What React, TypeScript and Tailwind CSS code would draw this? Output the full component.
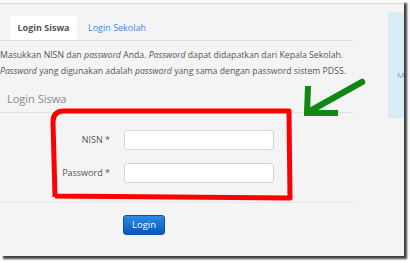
import React from "react";

export default function App() {
  const font = { fontFamily: '"Open Sans", "Liberation Sans", sans-serif' };
  return (
    <div className="w-[410px] h-[263px] bg-white" style={font}>
      <div className="relative w-[404px] h-[256px] bg-[#f4f4f4] shadow-[3px_3px_2px_rgba(0,0,0,0.75)] overflow-hidden">
        <div className="h-[4px] bg-[#fafafa] border-b border-[#dcdcdc]" />
        <div className="flex">
          <div className="w-[353px] shrink-0 overflow-hidden">
            <div className="mt-[12px] flex items-end border-b border-[#dddddd] pl-[10px] h-[25px]">
              <div className="h-[24px] w-[67px] bg-white flex items-center justify-center text-[9px] font-bold text-[#555]">
                Login Siswa
              </div>
              <div className="h-[24px] pl-[11px] flex items-center text-[9px] text-[#3b8ad8]">
                Login Sekolah
              </div>
            </div>
            <div className="mt-[6px] text-[8.7px] leading-[16px] text-[#555] whitespace-nowrap">
              <div>
                Masukkan NISN dan <i>password</i> Anda. <i>Password</i> dapat didapatkan dari Kepala Sekolah.
              </div>
              <div>
                <i>Password</i> yang digunakan adalah <i>password</i> yang sama dengan password sistem PDSS.
              </div>
            </div>
            <div className="mt-[12px] pb-[5px] pl-[7px] border-b border-[#e2e2e2] text-[11px] leading-[16px] text-[#8a8a8a]">
              Login Siswa
            </div>
            <div className="mt-[17px] flex flex-col gap-[13px]">
              <div className="flex items-center gap-[14px]">
                <div className="w-[110px] text-right text-[9px] text-[#555]">NISN *</div>
                <div className="w-[150px] h-[20px] bg-white border border-[#d4d4d4] rounded-[3px]" />
              </div>
              <div className="flex items-center gap-[14px]">
                <div className="w-[110px] text-right text-[9px] text-[#555]">Password *</div>
                <div className="w-[150px] h-[20px] bg-white border border-[#d4d4d4] rounded-[3px]" />
              </div>
            </div>
            <div className="mt-[19px] border-t border-[#e6e6e6]" />
            <div className="mt-[12px] pl-[123px]">
              <button className="w-[42px] h-[20px] rounded-[3px] bg-gradient-to-b from-[#2a8ae6] to-[#0a56b6] border border-[#0a4fa8] text-white text-[9.5px] flex items-center justify-center">
                Login
              </button>
            </div>
          </div>
          <div className="ml-[35px] mt-[8px] h-[106px] flex-1 bg-[#d9edf7] overflow-hidden">
            <div className="pt-[57px] pl-[9px] text-[8px] text-[#6fa0c8] whitespace-nowrap">Me</div>
          </div>
        </div>
        <svg className="absolute left-0 top-0" width="404" height="256" viewBox="0 0 404 256">
          <path
            d="M 55 197 L 53 122 Q 53 111 64 111 L 289 111 L 290 198 L 55 196"
            fill="none"
            stroke="#ff0000"
            strokeWidth="5"
            strokeLinejoin="round"
          />
          <path d="M 362 82 L 310 111" fill="none" stroke="#118811" strokeWidth="6.5" strokeLinecap="round" />
          <path d="M 308 86 L 307 113 L 338 113" fill="none" stroke="#118811" strokeWidth="6" strokeLinejoin="miter" />
        </svg>
      </div>
    </div>
  );
}
